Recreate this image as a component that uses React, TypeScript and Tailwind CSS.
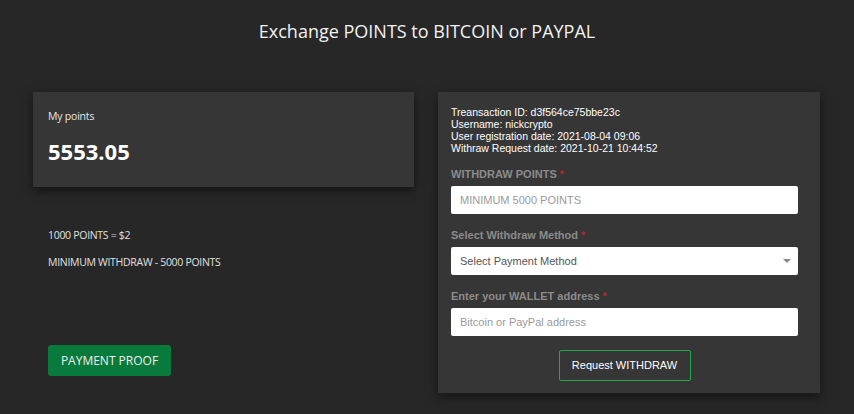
import React from 'react';

export default function App() {
  return (
    <div className="w-[854px] h-[414px] overflow-hidden bg-[#272727] font-['Open_Sans',sans-serif]">
      <h1 className="pt-[17px] text-center text-[18px] leading-[28px] text-[#f2f2f2]">
        Exchange POINTS to BITCOIN or PAYPAL
      </h1>

      <div className="mt-[47px] flex gap-[24px] pl-[33px]">
        <div className="w-[381px] flex flex-col">
          <div className="h-[95px] bg-[#373636] shadow-[0_4px_10px_rgba(0,0,0,0.5)] px-[15px] pt-[16px]">
            <p className="text-[10.5px] leading-[16px] tracking-[-0.2px] text-[#e6e6e6]">My points</p>
            <p className="mt-[13px] text-[22px] leading-[28px] font-bold text-white">5553.05</p>
          </div>

          <div className="pl-[15px] pt-[41px] text-[10.5px] leading-[14px] tracking-[-0.3px] text-[#e0e0e0]">
            <p>1000 POINTS = $2</p>
            <p className="mt-[13px]">MINIMUM WITHDRAW - 5000 POINTS</p>
          </div>

          <div className="pl-[15px] pt-[76px]">
            <button className="h-[31px] w-[123px] rounded-[3px] bg-[#087a3c] text-[12px] text-[#f0f0f0]">
              PAYMENT PROOF
            </button>
          </div>
        </div>

        <div className="w-[382px] h-[301px] bg-[#373636] shadow-[0_4px_10px_rgba(0,0,0,0.5)] px-[13px] pt-[14px] font-['Liberation_Sans',Arial,sans-serif]">
          <div className="text-[10.5px] leading-[12px] text-white">
            <p>Treansaction ID: d3f564ce75bbe23c</p>
            <p>Username: nickcrypto</p>
            <p>User registration date: 2021-08-04 09:06</p>
            <p>Withraw Request date: 2021-10-21 10:44:52</p>
          </div>

          <div className="w-[347px]">
            <label className="mt-[13px] block text-[11px] leading-[14px] font-bold text-[#8b8b8b]">
              WITHDRAW POINTS <span className="text-[#b02a37]">*</span>
            </label>
            <input
              className="mt-[5px] block h-[28px] w-full rounded-[2px] bg-white px-[9px] text-[11px] text-[#555] placeholder:text-[#9a9a9a] outline-none"
              placeholder="MINIMUM 5000 POINTS"
            />

            <label className="mt-[14px] block text-[11px] leading-[14px] font-bold text-[#8b8b8b]">
              Select Withdraw Method <span className="text-[#b02a37]">*</span>
            </label>
            <div className="mt-[5px] flex h-[28px] w-full items-center justify-between rounded-[2px] bg-white px-[9px]">
              <span className="text-[11px] text-[#555]">Select Payment Method</span>
              <svg width="8" height="4" viewBox="0 0 8 4" className="mr-[-2px]">
                <path d="M0 0h8L4 4z" fill="#888" />
              </svg>
            </div>

            <label className="mt-[14px] block text-[11px] leading-[14px] font-bold text-[#8b8b8b]">
              Enter your WALLET address <span className="text-[#b02a37]">*</span>
            </label>
            <input
              className="mt-[5px] block h-[28px] w-full rounded-[2px] bg-white px-[9px] text-[11px] text-[#555] placeholder:text-[#9a9a9a] outline-none"
              placeholder="Bitcoin or PayPal address"
            />

            <div className="mt-[14px] flex justify-center">
              <button className="h-[31px] w-[132px] rounded-[2px] border border-[#22a84a] text-[11px] text-white">
                Request WITHDRAW
              </button>
            </div>
          </div>
        </div>
      </div>
    </div>
  );
}
